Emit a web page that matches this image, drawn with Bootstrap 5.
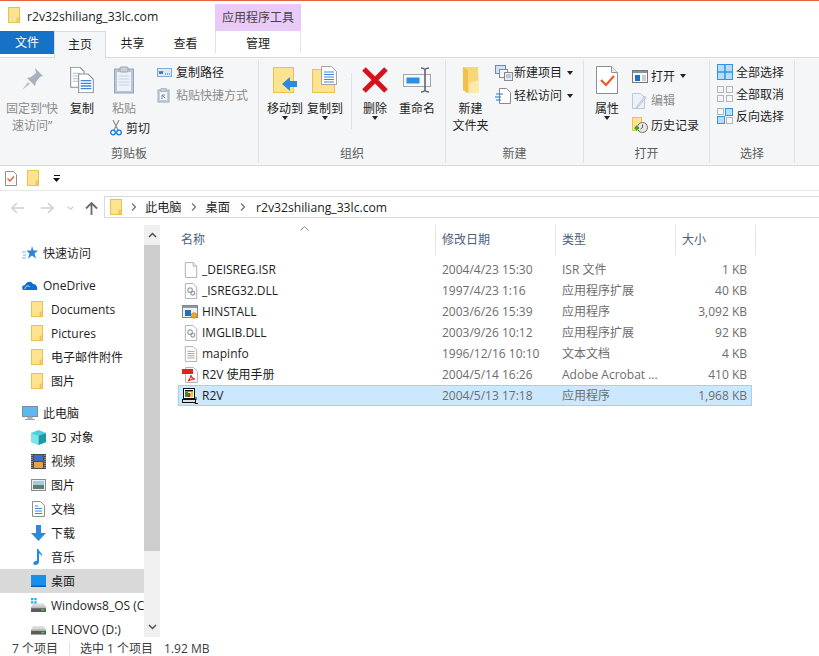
<!DOCTYPE html>
<html lang="zh-CN">
<head>
  <meta charset="UTF-8">
  <title>r2v32shiliang_33lc.com</title>
  <link href="https://cdn.jsdelivr.net/npm/bootstrap@5.3.0/dist/css/bootstrap.min.css" rel="stylesheet">
  <style>
    body {
      width: 819px;
      height: 656px;
      overflow: hidden;
      background: #fff;
      color: #1e1e1e;
      font-family: "Open Sans", "Noto Sans CJK SC", sans-serif;
      font-size: 12px;
      line-height: 17px;
    }
    svg { display: block; flex: none; }
    .top-line { height: 1px; background: #e8613e; }
    .title-row { height: 30px; }
    .title-icon { margin: 6px 7px 0 8px; }
    .title-text { width: 188px; padding-top: 7px; font-size: 12.2px; }
    .tool-label { width: 86px; margin-top: 3px; background: #e9c9f8; color: #444; text-align: center; line-height: 27px; }

    .tab-row { height: 26px; }
    .tab-file { width: 54px; height: 23px; background: #1672c6; color: #fff; text-align: center; line-height: 23px; }
    .tab-item { width: 53px; text-align: center; line-height: 25px; }
    .tab-main { width: 52px; height: 27px; background: #f5f6f7; border: 1px solid #dadbdc; border-bottom: 0; position: relative; z-index: 1; }
    .tab-tool { width: 86px; height: 22px; margin-left: 3px; border-left: 1px solid #e3e3e3; border-right: 1px solid #e3e3e3; line-height: 25px; text-align: center; }

    .ribbon { height: 109px; background: #f5f6f7; border-top: 1px solid #dadbdc; border-bottom: 1px solid #dadbdc; }
    .rb-group { height: 103px; margin-top: 2px; border-right: 1px solid #dfe1e4; }
    .rb-label { height: 18px; line-height: 18px; text-align: center; color: #5c5c5c; }
    .g-clip { width: 259px; }
    .g-clip > .rb-body { padding-left: 5px; }
    .g-org { width: 187px; }
    .g-org > .rb-body { padding-left: 6px; }
    .g-new { width: 138px; }
    .g-open { width: 126px; }
    .g-sel { width: 85px; }
    .g-sel > .rb-body { padding-left: 7px; }
    .big-btn { padding-top: 6px; text-align: center; }
    .big-btn > svg { margin-bottom: 6px; }
    .big-w54 { width: 54px; }
    .big-w46 { width: 46px; }
    .big-w49 { width: 49px; }
    .big-w40 { width: 40px; }
    .big-w38 { width: 38px; }
    .big-w44 { width: 44px; }
    .muted-txt { color: #8b8b8b; }
    .rb-caret { width: 0; height: 0; border: 3px solid transparent; border-top: 4px solid #222; border-bottom: 0; }
    .caret-big { margin-top: -1px; }
    .rb-sep { width: 1px; height: 56px; margin: 13px 3px 0 6px; background: #e0e1e3; }
    .small-col { padding-top: 1px; }
    .small-item { height: 23px; }
    .small-item .si-ico { width: 19px; flex: none; }
    .small-item .rb-caret { margin-left: 5px; }
    .paste-col { margin-left: 14px; }
    .cut-item { height: 20px; margin: 1px 0 0 5px; }
    .cut-item svg { margin-right: 4px; }
    .open-col { padding: 4px 0 0 2px; }
    .open-col .small-item { height: 24.5px; }
    .sel-col .small-item { height: 22px; }

    .qat-row { height: 25px; border-bottom: 1px solid #e6e6e6; padding-left: 5px; }
    .qat-gap { margin: 0 14px 0 10px; }
    .addr-row { height: 34px; }
    .addr-nav { width: 104px; padding-left: 11px; }
    .nav-fwd { margin-left: 17px; }
    .nav-down { margin-left: 13px; }
    .nav-up { margin-left: 11px; }
    .addr-box { flex: 1; height: 22px; margin-top: 5px; border: 1px solid #d9d9d9; border-right: 0; padding-left: 5px; font-size: 12.2px; }
    .addr-chev { margin: 0 10px 0 9px; }
    .addr-chev-first { margin: 0 9px; }
    .addr-chev-last { margin: 0 11px 0 10px; }

    .main-area { height: 412px; }
    .nav-pane { width: 144px; padding-top: 16px; overflow: hidden; }
    .nav-line { height: 24px; white-space: nowrap; overflow: hidden; }
    .nav-top { margin-bottom: 8px; }
    .nav-line.lvl1 { padding-left: 22px; }
    .nav-line.lvl2 { padding-left: 31px; }
    .nav-line.lvl1 svg { margin-right: 5px; }
    .nav-line.lvl2 svg { margin-right: 5px; }
    .nav-line.active-line { background: #d9d9d9; }

    .v-scroll { width: 16px; background: #f0f0f0; }
    .v-btn { height: 20px; }
    .v-thumb { height: 306px; background: #cdcdcd; }
    .v-fill { flex: 1; }

    .files-pane { flex: 1; position: relative; }
    .head-row { height: 30px; margin-left: 15px; color: #4c607a; }
    .head-cell { padding-left: 6px; line-height: 30px; border-right: 1px solid #e5e5e5; }
    .c-name { width: 261px; }
    .c-date { width: 120px; }
    .c-type { width: 120px; }
    .c-size { width: 80px; }
    .sort-mark { position: absolute; left: 140px; top: 1px; }
    .file-list { margin: 4px 0 0 18px; width: 574px; }
    .file-row { height: 21px; line-height: 19px; border: 1px solid transparent; color: #6d6d6d; }
    .file-row.picked { background: #cce8ff; border-color: #99d1ff; }
    .fr-name { width: 257px; color: #1e1e1e; padding-left: 5px; }
    .fr-name svg { margin-right: 4px; }
    .fr-name svg.ico-wide { margin-left: -2px; }
    .fr-date { width: 120px; padding-left: 6px; }
    .fr-type { width: 120px; padding-left: 6px; white-space: nowrap; overflow: hidden; }
    .fr-size { width: 75px; text-align: right; padding-right: 4px; }

    .status-row { height: 19px; padding-left: 12px; color: #3c3c3c; line-height: 24px; }
    .st-sep { width: 1px; height: 13px; margin: 5px 10px 0 11px; background: #e4e4e4; }
    .st-size { margin-left: 11px; }
  </style>
</head>
<body>
  <svg width="0" height="0" class="position-absolute">
    <defs>
      <symbol id="i-folder" viewBox="0 0 12 16">
        <rect x=".5" y=".5" width="11" height="15" fill="#fde28f" stroke="#e9c24f"/>
        <rect x="9" y="11" width="2.5" height="4.5" fill="#f3cf68" stroke="#e4b93f" stroke-width=".6"/>
      </symbol>
      <symbol id="i-doc" viewBox="0 0 16 18">
        <path d="M1.5.5h9l4 4v13h-13z" fill="#fdfdfd" stroke="#a9a9a9"/>
        <path d="M10.5.5v4h4" fill="#eee" stroke="#a9a9a9"/>
      </symbol>
      <symbol id="i-dll" viewBox="0 0 16 18">
        <path d="M1.5.5h9l4 4v13h-13z" fill="#fdfdfd" stroke="#a9a9a9"/>
        <circle cx="7" cy="8" r="2.6" fill="none" stroke="#9aa7b5" stroke-width="1.4"/>
        <circle cx="10" cy="11.5" r="2.2" fill="none" stroke="#8b98a7" stroke-width="1.3"/>
      </symbol>
      <symbol id="i-txt" viewBox="0 0 16 18">
        <path d="M1.5.5h9l4 4v13h-13z" fill="#fdfdfd" stroke="#a9a9a9"/>
        <path d="M4 6h8M4 8.500h8M4 11h8M4 13.500h8" stroke="#9a9a9a"/>
      </symbol>
      <symbol id="i-setup" viewBox="0 0 16 16">
        <rect x=".5" y="1.500" width="15" height="12" fill="#eef1f4" stroke="#7d8790"/>
        <rect x="1" y="2" width="14" height="2" fill="#8c99a6"/>
        <rect x="3" y="6" width="6" height="6" fill="#1d6fc4"/>
        <circle cx="12" cy="11.500" r="2.800" fill="#f0a527" stroke="#bb7a12" stroke-width=".6"/>
      </symbol>
      <symbol id="i-pdf" viewBox="0 0 16 16">
        <path d="M3.500.5h8l4 4v11h-12z" fill="#fff" stroke="#b5b5b5"/>
        <rect x="0" y="2" width="11" height="5" fill="#e2231a"/>
        <path d="M6 14c2-2 3-4 3-6 0 2 2 4 4 4-2 0-5 1-7 2z" fill="none" stroke="#e2231a" stroke-width="1.100"/>
      </symbol>
      <symbol id="i-r2v" viewBox="0 0 16 16">
        <rect x="1.500" y=".5" width="11" height="10" fill="#fff" stroke="#111"/>
        <rect x="3" y="2" width="8" height="1.500" fill="#111"/>
        <path d="M3 4h3v5H3z" fill="#1a9a2e"/>
        <path d="M6 5h2.500v4H6z" fill="#e01b1b"/>
        <path d="M8.500 4H11v5H8.500z" fill="#e8d018"/>
        <rect x=".5" y="11.500" width="13" height="3" fill="#dedede" stroke="#111"/>
        <path d="M13 14v1.500h3M14 9v3" fill="none" stroke="#111"/>
      </symbol>
      <symbol id="i-copy-doc" viewBox="0 0 18 20">
        <path d="M.5.5h7l3 3v12H.5z" fill="#fff" stroke="#8f8f8f" stroke-width=".8"/>
        <path d="M2 5h6M2 7h6M2 9h6M2 11h6" stroke="#a9c1de" stroke-width=".8"/>
        <path d="M6.500 5.500h7l4 4v10h-11z" fill="#fff" stroke="#8f8f8f" stroke-width=".8"/>
        <path d="M8 10.500h8M8 12.500h8M8 14.500h8M8 16.500h8" stroke="#3f86d6" stroke-width="1"/>
      </symbol>
      <symbol id="i-drive" viewBox="0 0 16 12">
        <path d="M2 3h12l2 5v4H0V8z" fill="#d9d9d9"/>
        <rect x="0" y="7" width="16" height="5" fill="#5b5b5b"/>
        <rect x="0" y="6" width="16" height="2" fill="#bdbdbd"/>
        <rect x="11" y="9" width="3" height="1.500" fill="#49d34a"/>
      </symbol>
    </defs>
  </svg>

  <div class="top-line"></div>
  <div class="title-row d-flex">
    <svg class="title-icon" width="12" height="16"><use href="#i-folder"/></svg>
    <div class="title-text">r2v32shiliang_33lc.com</div>
    <div class="tool-label">应用程序工具</div>
  </div>

  <div class="tab-row d-flex">
    <div class="tab-file">文件</div>
    <div class="tab-item tab-main">主页</div>
    <div class="tab-item">共享</div>
    <div class="tab-item">查看</div>
    <div class="tab-tool">管理</div>
  </div>

  <div class="ribbon d-flex">
    <!-- 剪贴板 -->
    <div class="rb-group g-clip d-flex flex-column">
      <div class="rb-body d-flex flex-grow-1">
        <div class="big-btn big-w54 d-flex flex-column align-items-center muted-txt">
          <svg width="28" height="28" viewBox="0 0 28 28">
            <path d="M17 2l8 8-3 1-4 5-1 4-8-8 4-1 5-4z" fill="#a8b2bd"/>
            <path d="M10 16l-6 8 8-6z" fill="#b9c1ca"/>
          </svg>
          <div>固定到“快<br>速访问”</div>
        </div>
        <div class="big-btn big-w46 d-flex flex-column align-items-center">
          <svg width="24" height="28" viewBox="0 0 18 20"><use href="#i-copy-doc"/></svg>
          <div>复制</div>
        </div>
        <div class="d-flex flex-column">
          <div class="d-flex">
            <div class="big-btn big-w38 d-flex flex-column align-items-center muted-txt">
              <svg width="22" height="28" viewBox="0 0 22 28">
                <rect x="1.500" y="3" width="19" height="24" fill="#b9c6d8" stroke="#93a5bc"/>
                <rect x="4" y="6" width="14" height="19" fill="#eef2f8"/>
                <path d="M6 10h10M6 13h10M6 16h10M6 19h10" stroke="#c5d0e0"/>
                <rect x="7" y="1" width="8" height="5" rx="1" fill="#c9cfd6" stroke="#9ba4ae"/>
              </svg>
              <div>粘贴</div>
            </div>
            <div class="small-col paste-col">
              <div class="small-item d-flex align-items-center">
                <div class="si-ico">
                  <svg width="15" height="9" viewBox="0 0 15 9">
                    <rect x=".5" y=".5" width="14" height="8" fill="#dbe9f8" stroke="#7fa9d6"/>
                    <path d="M2 3l1 3 1-3 1 3 1-3M8 6h1M10 6h1M12 6h1" fill="none" stroke="#2a4f7c" stroke-width=".8"/>
                  </svg>
                </div>
                <span>复制路径</span>
              </div>
              <div class="small-item d-flex align-items-center muted-txt">
                <div class="si-ico">
                  <svg width="14" height="15" viewBox="0 0 14 15">
                    <rect x="1" y="2" width="11" height="12" fill="#c3cfde" stroke="#9aabbf"/>
                    <rect x="3" y="4" width="7" height="8" fill="#f4f6f9"/>
                    <rect x="4" y=".5" width="5" height="3" fill="#c9cfd6" stroke="#9ba4ae" stroke-width=".6"/>
                    <path d="M5 11V7h3M5 7l3 3" stroke="#7d8ea3" fill="none"/>
                  </svg>
                </div>
                <span>粘贴快捷方式</span>
              </div>
            </div>
          </div>
          <div class="cut-item d-flex align-items-center">
            <svg width="12" height="16" viewBox="0 0 12 16">
              <path d="M3 0l5 10M9 0L4 10" stroke="#8c8c8c" stroke-width="1.200"/>
              <circle cx="3" cy="12.500" r="2.300" fill="none" stroke="#1c78cf" stroke-width="1.300"/>
              <circle cx="9" cy="12.500" r="2.300" fill="none" stroke="#1c78cf" stroke-width="1.300"/>
            </svg>
            <span>剪切</span>
          </div>
        </div>
      </div>
      <div class="rb-label">剪贴板</div>
    </div>

    <!-- 组织 -->
    <div class="rb-group g-org d-flex flex-column">
      <div class="rb-body d-flex flex-grow-1">
        <div class="big-btn big-w40 d-flex flex-column align-items-center">
          <svg width="26" height="28" viewBox="0 0 26 28">
            <rect x="1.500" y="1.500" width="20" height="25" fill="#fde28f" stroke="#e9c24f"/>
            <path d="M10 18l8-7v4h7v6h-7v4z" fill="#2b8ae0"/>
          </svg>
          <div>移动到</div>
          <div class="rb-caret caret-big"></div>
        </div>
        <div class="big-btn big-w40 d-flex flex-column align-items-center">
          <svg width="28" height="28" viewBox="0 0 28 28">
            <rect x="1.500" y="3.500" width="22" height="23" fill="#fde28f" stroke="#e9c24f"/>
            <path d="M10.500.5h10l5 5v13h-15z" fill="#fff" stroke="#8f8f8f" stroke-width=".8"/>
            <path d="M13 6h10M13 8.500h10M13 11h10M13 13.500h10M13 16h10" stroke="#3f86d6"/>
          </svg>
          <div>复制到</div>
          <div class="rb-caret caret-big"></div>
        </div>
        <div class="rb-sep"></div>
        <div class="big-btn big-w40 d-flex flex-column align-items-center">
          <svg width="28" height="28" viewBox="0 0 28 28">
            <path d="M3 3l22 22M25 3L3 25" stroke="#d8101c" stroke-width="5"/>
          </svg>
          <div>删除</div>
          <div class="rb-caret caret-big"></div>
        </div>
        <div class="big-btn big-w44 d-flex flex-column align-items-center">
          <svg width="28" height="28" viewBox="0 0 28 28">
            <rect x=".5" y="8.500" width="27" height="12" fill="#f7f8f9" stroke="#a5a5a5"/>
            <rect x="3.500" y="11.500" width="13" height="6" fill="#2c8fe6"/>
            <path d="M18 2c2 0 3 .5 4 1.500C23 2.500 24 2 26 2M22 3.500v21M18 26c2 0 3-.5 4-1.500 1 1 2 1.500 4 1.500" fill="none" stroke="#5c6670" stroke-width="1.600"/>
          </svg>
          <div>重命名</div>
        </div>
      </div>
      <div class="rb-label">组织</div>
    </div>

    <!-- 新建 -->
    <div class="rb-group g-new d-flex flex-column">
      <div class="rb-body d-flex flex-grow-1">
        <div class="big-btn big-w49 d-flex flex-column align-items-center">
          <svg width="20" height="28" viewBox="0 0 20 28">
            <path d="M2 1h15l1 26H6L2 24z" fill="#fbd676"/>
            <path d="M2 1l5 3v23L2 24z" fill="#f2c04f"/>
            <path d="M8 17l10-3v13H8z" fill="#fde9ad"/>
          </svg>
          <div>新建<br>文件夹</div>
        </div>
        <div class="small-col">
          <div class="small-item d-flex align-items-center">
            <div class="si-ico">
              <svg width="18" height="16" viewBox="0 0 18 16">
                <rect x=".5" y=".5" width="10" height="8" fill="#cfe3f6" stroke="#6f8aa6"/>
                <rect x="4.500" y="4.500" width="8" height="8" fill="#f6f6f6" stroke="#8a8a8a"/>
                <rect x="9.500" y="7.500" width="8" height="8" fill="#e6ebf2" stroke="#8a8a8a"/>
                <path d="M11 10h5M11 12h5" stroke="#8fa6c4"/>
              </svg>
            </div>
            <span>新建项目</span>
            <div class="rb-caret"></div>
          </div>
          <div class="small-item d-flex align-items-center">
            <div class="si-ico">
              <svg width="16" height="16" viewBox="0 0 16 16">
                <path d="M4.500.5h7l4 4v11h-11z" fill="#fff" stroke="#8a8a8a"/>
                <path d="M1 6h7M0 9h6M1 12h5" stroke="#1f78d1" stroke-width="1.200"/>
              </svg>
            </div>
            <span>轻松访问</span>
            <div class="rb-caret"></div>
          </div>
        </div>
      </div>
      <div class="rb-label">新建</div>
    </div>

    <!-- 打开 -->
    <div class="rb-group g-open d-flex flex-column">
      <div class="rb-body d-flex flex-grow-1">
        <div class="big-btn big-w46 d-flex flex-column align-items-center">
          <svg width="22" height="28" viewBox="0 0 22 28">
            <path d="M.5.5h15l6 6v21H.5z" fill="#fff" stroke="#8f8f8f"/>
            <path d="M15.500.5v6h6" fill="#eee" stroke="#8f8f8f"/>
            <path d="M5 14l5 5 8-9" fill="none" stroke="#f0591d" stroke-width="2.200"/>
          </svg>
          <div>属性</div>
          <div class="rb-caret caret-big"></div>
        </div>
        <div class="open-col">
          <div class="small-item d-flex align-items-center">
            <div class="si-ico">
              <svg width="16" height="13" viewBox="0 0 16 13">
                <rect x=".5" y=".5" width="15" height="12" fill="#fafafa" stroke="#6f7780"/>
                <rect x="1" y="1" width="14" height="2" fill="#87919b"/>
                <rect x="3" y="5" width="5" height="6" fill="#1870c9"/>
                <path d="M10 6h4M10 8h4M10 10h4" stroke="#9aa3ad"/>
              </svg>
            </div>
            <span>打开</span>
            <div class="rb-caret"></div>
          </div>
          <div class="small-item d-flex align-items-center muted-txt">
            <div class="si-ico">
              <svg width="15" height="16" viewBox="0 0 15 16">
                <path d="M.5.5h8l4 4v11H.5z" fill="#eef2f8" stroke="#bcc8da"/>
                <path d="M13 3L5 13l-1 2 2-1 8-9z" fill="#d6deea" stroke="#aebbd0" stroke-width=".7"/>
              </svg>
            </div>
            <span>编辑</span>
          </div>
          <div class="small-item d-flex align-items-center">
            <div class="si-ico">
              <svg width="16" height="16" viewBox="0 0 16 16">
                <rect x=".5" y=".5" width="9" height="13" fill="#fde28f" stroke="#e9c24f"/>
                <circle cx="10.500" cy="10.500" r="5" fill="#e8e8e8" stroke="#6d6d6d"/>
                <path d="M10.500 7.500v3l-2 1.500" fill="none" stroke="#555"/>
                <path d="M2 11l3-3v2h2v2H5v2z" fill="#2fa32f"/>
              </svg>
            </div>
            <span>历史记录</span>
          </div>
        </div>
      </div>
      <div class="rb-label">打开</div>
    </div>

    <!-- 选择 -->
    <div class="rb-group g-sel d-flex flex-column">
      <div class="rb-body small-col sel-col flex-grow-1">
        <div class="small-item d-flex align-items-center">
          <div class="si-ico">
            <svg width="16" height="16" viewBox="0 0 16 16">
              <rect x=".5" y=".5" width="15" height="15" fill="#b9dcf8" stroke="#2f95e8"/>
              <path d="M8 0v16M0 8h16" stroke="#2f95e8" stroke-width="1.500"/>
            </svg>
          </div>
          <span>全部选择</span>
        </div>
        <div class="small-item d-flex align-items-center">
          <div class="si-ico">
            <svg width="16" height="16" viewBox="0 0 16 16" fill="none" stroke="#b5b5b5">
              <rect x=".5" y=".5" width="6" height="6"/><rect x="9.500" y=".5" width="6" height="6"/>
              <rect x=".5" y="9.500" width="6" height="6"/><rect x="9.500" y="9.500" width="6" height="6"/>
            </svg>
          </div>
          <span>全部取消</span>
        </div>
        <div class="small-item d-flex align-items-center">
          <div class="si-ico">
            <svg width="16" height="16" viewBox="0 0 16 16">
              <rect x=".5" y=".5" width="6" height="6" fill="none" stroke="#b5b5b5"/>
              <rect x="8.500" y=".5" width="7" height="7" fill="#b9dcf8" stroke="#2f95e8"/>
              <rect x=".5" y="8.500" width="7" height="7" fill="#b9dcf8" stroke="#2f95e8"/>
              <rect x="9.500" y="9.500" width="6" height="6" fill="none" stroke="#b5b5b5"/>
            </svg>
          </div>
          <span>反向选择</span>
        </div>
      </div>
      <div class="rb-label">选择</div>
    </div>
  </div>

  <div class="qat-row d-flex align-items-center">
    <svg width="12" height="15" viewBox="0 0 12 15">
      <path d="M.5.5h8l3 3v11H.5z" fill="#fff" stroke="#8f8f8f"/>
      <path d="M2.500 7.500l2.500 2.500 4-4.500" fill="none" stroke="#f0591d" stroke-width="1.300"/>
    </svg>
    <svg class="qat-gap" width="12" height="16"><use href="#i-folder"/></svg>
    <svg width="8" height="7" viewBox="0 0 8 7">
      <path d="M1 0h6v1H1zM0 3h7L3.500 7z" fill="#111"/>
    </svg>
  </div>

  <div class="addr-row d-flex">
    <div class="addr-nav d-flex align-items-center">
      <svg width="13" height="12" viewBox="0 0 13 12"><path d="M6 1L1 6l5 5M1 6h12" fill="none" stroke="#cfcfcf" stroke-width="1.500"/></svg>
      <svg class="nav-fwd" width="13" height="12" viewBox="0 0 13 12"><path d="M7 1l5 5-5 5M12 6H0" fill="none" stroke="#cfcfcf" stroke-width="1.500"/></svg>
      <svg class="nav-down" width="7" height="5" viewBox="0 0 7 5"><path d="M.5.5l3 3 3-3" fill="none" stroke="#cfcfcf" stroke-width="1.200"/></svg>
      <svg class="nav-up" width="13" height="13" viewBox="0 0 13 13"><path d="M1 6.500l5.500-5.500 5.500 5.500M6.500 1.500V13" fill="none" stroke="#6a6a6a" stroke-width="1.800"/></svg>
    </div>
    <div class="addr-box d-flex align-items-center">
      <svg width="12" height="16"><use href="#i-folder"/></svg>
      <svg class="addr-chev-first" width="5" height="8" viewBox="0 0 5 8"><path d="M1 .5L4.500 4 1 7.500" fill="none" stroke="#777" stroke-width="1.300"/></svg>
      <span>此电脑</span>
      <svg class="addr-chev" width="5" height="8" viewBox="0 0 5 8"><path d="M1 .5L4.500 4 1 7.500" fill="none" stroke="#777" stroke-width="1.300"/></svg>
      <span>桌面</span>
      <svg class="addr-chev-last" width="5" height="8" viewBox="0 0 5 8"><path d="M1 .5L4.500 4 1 7.500" fill="none" stroke="#777" stroke-width="1.300"/></svg>
      <span>r2v32shiliang_33lc.com</span>
    </div>
  </div>

  <div class="main-area d-flex">
    <div class="nav-pane">
      <div class="nav-line lvl1 nav-top d-flex align-items-center">
        <svg width="16" height="14" viewBox="0 0 16 14"><path d="M10 0l1.500 4.500H16l-3.500 3 1.500 5-4-3-4 3 1.500-5-3-3h4.500z" fill="#2b83d6"/><path d="M0 6h4M1 9h3M0 12h4" stroke="#7fb5e8"/></svg>
        <span>快速访问</span>
      </div>
      <div class="nav-line lvl1 d-flex align-items-center">
        <svg width="16" height="10" viewBox="0 0 16 10"><path d="M1 10C-1 7 1 5 3 5c1-3 6-5 8-1 3 0 5 3 4 6z" fill="#0a6fd0"/><path d="M3 9c0-3 3-4 5-2" fill="none" stroke="#fff" stroke-width=".8"/></svg>
        <span>OneDrive</span>
      </div>
      <div class="nav-line lvl2 d-flex align-items-center"><svg width="12" height="16" class="me-2"><use href="#i-folder"/></svg><span>Documents</span></div>
      <div class="nav-line lvl2 d-flex align-items-center"><svg width="12" height="16" class="me-2"><use href="#i-folder"/></svg><span>Pictures</span></div>
      <div class="nav-line lvl2 d-flex align-items-center"><svg width="12" height="16" class="me-2"><use href="#i-folder"/></svg><span>电子邮件附件</span></div>
      <div class="nav-line lvl2 nav-top d-flex align-items-center"><svg width="12" height="16" class="me-2"><use href="#i-folder"/></svg><span>图片</span></div>
      <div class="nav-line lvl1 d-flex align-items-center">
        <svg width="16" height="15" viewBox="0 0 16 15"><rect x=".5" y=".5" width="15" height="10" fill="#5cb8ee" stroke="#7f8c98"/><path d="M6 11h4v2H6zM3 13.500h10" stroke="#9aa6b1" fill="#b9c3cc"/></svg>
        <span>此电脑</span>
      </div>
      <div class="nav-line lvl2 d-flex align-items-center">
        <svg width="15" height="15" viewBox="0 0 15 15"><path d="M7.500 0L15 3v9l-7.500 3L0 12V3z" fill="#4fd0d8"/><path d="M7.500 6L15 3v9l-7.500 3z" fill="#1c9aa8"/><path d="M0 3l7.500 3v9L0 12z" fill="#7fe3e8"/></svg>
        <span>3D 对象</span>
      </div>
      <div class="nav-line lvl2 d-flex align-items-center">
        <svg width="15" height="15" viewBox="0 0 15 15"><rect width="15" height="15" fill="#4a4a4a"/><rect x="3" y="1" width="9" height="6" fill="#3d6bd6"/><rect x="3" y="8" width="9" height="6" fill="#e0a93a"/><path d="M1 1v13M14 1v13" stroke="#ddd" stroke-dasharray="1 1"/></svg>
        <span>视频</span>
      </div>
      <div class="nav-line lvl2 d-flex align-items-center">
        <svg width="15" height="12" viewBox="0 0 15 12"><rect x=".5" y=".5" width="14" height="11" fill="#e8eef2" stroke="#8b8b8b"/><rect x="2" y="2" width="11" height="4" fill="#a9c8e0"/><rect x="2" y="6" width="11" height="4" fill="#5f7f6b"/></svg>
        <span>图片</span>
      </div>
      <div class="nav-line lvl2 d-flex align-items-center">
        <svg width="15" height="16" viewBox="0 0 15 16"><path d="M1.500.5h8l4 4v11h-12z" fill="#fff" stroke="#8f8f8f"/><path d="M4 5h3M4 7.500h7M4 10h7M4 12.500h7" stroke="#3f86d6"/></svg>
        <span>文档</span>
      </div>
      <div class="nav-line lvl2 d-flex align-items-center">
        <svg width="15" height="16" viewBox="0 0 15 16"><path d="M5 0h5v8h5l-7.500 8L0 8h5z" fill="#2b8ae0"/></svg>
        <span>下载</span>
      </div>
      <div class="nav-line lvl2 d-flex align-items-center">
        <svg width="15" height="16" viewBox="0 0 15 16"><path d="M6 0h1.500c0 3 5 4 3.500 8 0-2-1.500-3-3-3.500V13c0 2-2 3-4 3s-2-2-1-3 2-1.500 3-1z" fill="#1c8ae6"/></svg>
        <span>音乐</span>
      </div>
      <div class="nav-line lvl2 active-line d-flex align-items-center">
        <svg width="15" height="12" viewBox="0 0 15 12"><rect width="15" height="12" fill="#1a8fe8"/><rect y="10.500" width="15" height="1.500" fill="#0d5fa8"/></svg>
        <span>桌面</span>
      </div>
      <div class="nav-line lvl2 d-flex align-items-center">
        <svg width="15" height="14" viewBox="0 0 16 15"><use href="#i-drive" y="3" height="12" width="16"/><path d="M0 0h2.500v2.500H0zM3.500 0H6v2.500H3.500zM0 3.500h2.500V6H0zM3.500 3.500H6V6H3.500z" fill="#1cb0ea"/></svg>
        <span>Windows8_OS (C:)</span>
      </div>
      <div class="nav-line lvl2 d-flex align-items-center">
        <svg width="15" height="12" viewBox="0 0 16 12"><use href="#i-drive" width="16" height="12"/></svg>
        <span>LENOVO (D:)</span>
      </div>
    </div>

    <div class="v-scroll d-flex flex-column">
      <div class="v-btn d-flex align-items-center justify-content-center">
        <svg width="9" height="6" viewBox="0 0 9 6"><path d="M1 5l3.500-3.500L8 5" fill="none" stroke="#505050" stroke-width="1.500"/></svg>
      </div>
      <div class="v-thumb"></div>
      <div class="v-fill"></div>
      <div class="v-btn d-flex align-items-center justify-content-center">
        <svg width="9" height="6" viewBox="0 0 9 6"><path d="M1 1l3.500 3.500L8 1" fill="none" stroke="#505050" stroke-width="1.500"/></svg>
      </div>
    </div>

    <div class="files-pane">
      <svg class="sort-mark" width="9" height="5" viewBox="0 0 9 5"><path d="M.5 4.500l4-4 4 4" fill="none" stroke="#8a8a8a"/></svg>
      <div class="head-row d-flex">
        <div class="head-cell c-name">名称</div>
        <div class="head-cell c-date">修改日期</div>
        <div class="head-cell c-type">类型</div>
        <div class="head-cell c-size">大小</div>
      </div>
      <div class="file-list">
        <div class="file-row d-flex">
          <div class="fr-name d-flex align-items-center"><svg width="14" height="16"><use href="#i-doc"/></svg><span>_DEISREG.ISR</span></div>
          <div class="fr-date">2004/4/23 15:30</div><div class="fr-type">ISR 文件</div><div class="fr-size">1 KB</div>
        </div>
        <div class="file-row d-flex">
          <div class="fr-name d-flex align-items-center"><svg width="14" height="16"><use href="#i-dll"/></svg><span>_ISREG32.DLL</span></div>
          <div class="fr-date">1997/4/23 1:16</div><div class="fr-type">应用程序扩展</div><div class="fr-size">40 KB</div>
        </div>
        <div class="file-row d-flex">
          <div class="fr-name d-flex align-items-center"><svg class="ico-wide" width="16" height="16"><use href="#i-setup"/></svg><span>HINSTALL</span></div>
          <div class="fr-date">2003/6/26 15:39</div><div class="fr-type">应用程序</div><div class="fr-size">3,092 KB</div>
        </div>
        <div class="file-row d-flex">
          <div class="fr-name d-flex align-items-center"><svg width="14" height="16"><use href="#i-dll"/></svg><span>IMGLIB.DLL</span></div>
          <div class="fr-date">2003/9/26 10:12</div><div class="fr-type">应用程序扩展</div><div class="fr-size">92 KB</div>
        </div>
        <div class="file-row d-flex">
          <div class="fr-name d-flex align-items-center"><svg width="14" height="16"><use href="#i-txt"/></svg><span>mapinfo</span></div>
          <div class="fr-date">1996/12/16 10:10</div><div class="fr-type">文本文档</div><div class="fr-size">4 KB</div>
        </div>
        <div class="file-row d-flex">
          <div class="fr-name d-flex align-items-center"><svg class="ico-wide" width="16" height="16"><use href="#i-pdf"/></svg><span>R2V 使用手册</span></div>
          <div class="fr-date">2004/5/14 16:26</div><div class="fr-type">Adobe Acrobat ...</div><div class="fr-size">410 KB</div>
        </div>
        <div class="file-row picked d-flex">
          <div class="fr-name d-flex align-items-center"><svg class="ico-wide" width="16" height="16"><use href="#i-r2v"/></svg><span>R2V</span></div>
          <div class="fr-date">2004/5/13 17:18</div><div class="fr-type">应用程序</div><div class="fr-size">1,968 KB</div>
        </div>
      </div>
    </div>
  </div>

  <div class="status-row d-flex">
    <span>7 个项目</span>
    <div class="st-sep"></div>
    <span>选中 1 个项目</span>
    <span class="st-size">1.92 MB</span>
  </div>

  <script src="https://cdn.jsdelivr.net/npm/bootstrap@5.3.0/dist/js/bootstrap.bundle.min.js"></script>
</body>
</html>
